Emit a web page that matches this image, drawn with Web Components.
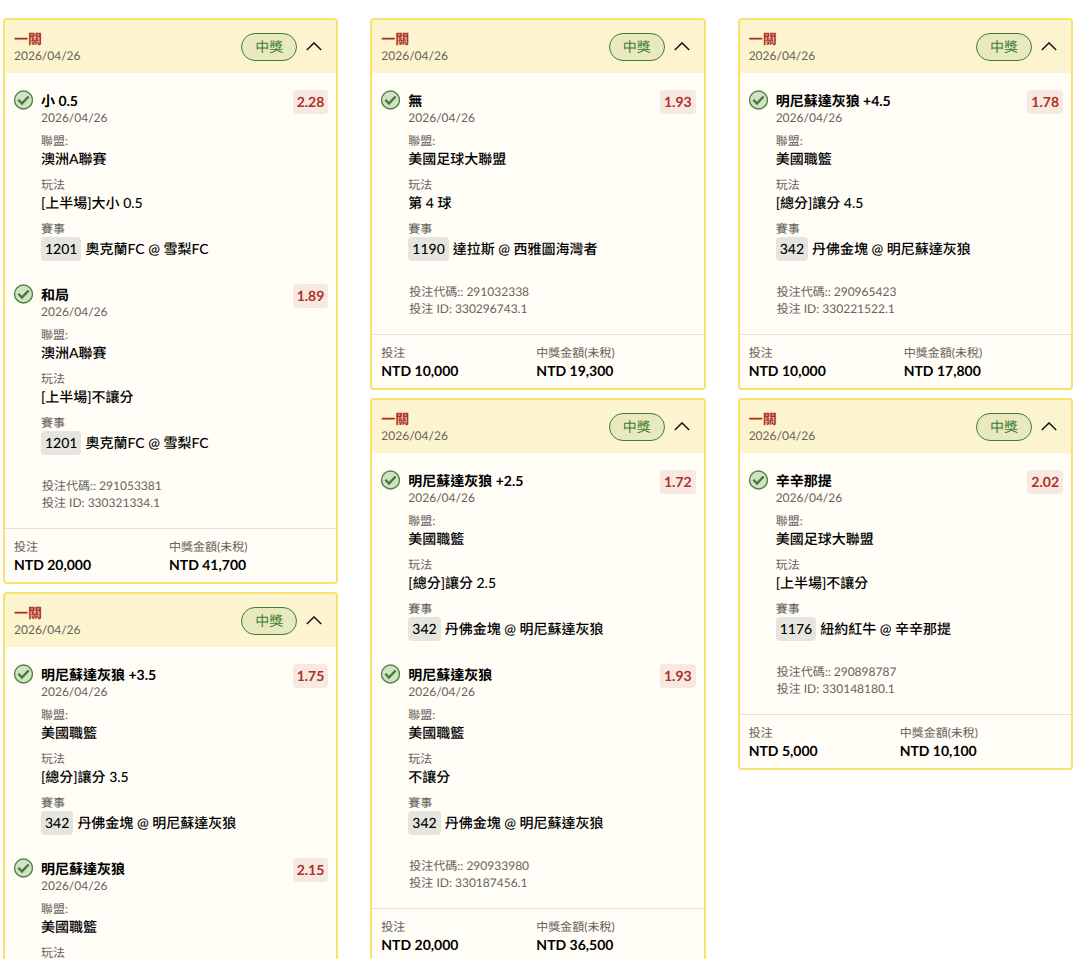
<!DOCTYPE html>
<html lang="zh-Hant">
<head>
    <meta charset="UTF-8">
    <meta name="viewport" content="width=device-width, initial-scale=1.0">
    <title>投注紀錄</title>
    <style>
        body {
            margin: 0;
            background: #fff;
            color: #000;
            font-family: Lato, "Noto Sans CJK TC", sans-serif;
            font-size: 14px;
            line-height: 20px;
            text-rendering: geometricPrecision;
        }
    </style>
</head>
<body>
    <bet-board>
        <bet-column>
            <bet-slip date="2026/04/26" code="291053381" bet-id="330321334.1" stake="NTD 20,000" payout="NTD 41,700">
                <bet-leg date="2026/04/26" odds="2.28" league="澳洲A聯賽" play="[上半場]大小 0.5" number="1201" match="奧克蘭FC @ 雪梨FC">小 0.5</bet-leg>
                <bet-leg date="2026/04/26" odds="1.89" league="澳洲A聯賽" play="[上半場]不讓分" number="1201" match="奧克蘭FC @ 雪梨FC">和局</bet-leg>
            </bet-slip>
            <bet-slip date="2026/04/26">
                <bet-leg date="2026/04/26" odds="1.75" league="美國職籃" play="[總分]讓分 3.5" number="342" match="丹佛金塊 @ 明尼蘇達灰狼">明尼蘇達灰狼 +3.5</bet-leg>
                <bet-leg date="2026/04/26" odds="2.15" league="美國職籃" play="不讓分" number="342" match="丹佛金塊 @ 明尼蘇達灰狼">明尼蘇達灰狼</bet-leg>
            </bet-slip>
        </bet-column>
        <bet-column>
            <bet-slip date="2026/04/26" code="291032338" bet-id="330296743.1" stake="NTD 10,000" payout="NTD 19,300">
                <bet-leg date="2026/04/26" odds="1.93" league="美國足球大聯盟" play="第 4 球" number="1190" match="達拉斯 @ 西雅圖海灣者">無</bet-leg>
            </bet-slip>
            <bet-slip date="2026/04/26" code="290933980" bet-id="330187456.1" stake="NTD 20,000" payout="NTD 36,500">
                <bet-leg date="2026/04/26" odds="1.72" league="美國職籃" play="[總分]讓分 2.5" number="342" match="丹佛金塊 @ 明尼蘇達灰狼">明尼蘇達灰狼 +2.5</bet-leg>
                <bet-leg date="2026/04/26" odds="1.93" league="美國職籃" play="不讓分" number="342" match="丹佛金塊 @ 明尼蘇達灰狼">明尼蘇達灰狼</bet-leg>
            </bet-slip>
        </bet-column>
        <bet-column>
            <bet-slip date="2026/04/26" code="290965423" bet-id="330221522.1" stake="NTD 10,000" payout="NTD 17,800">
                <bet-leg date="2026/04/26" odds="1.78" league="美國職籃" play="[總分]讓分 4.5" number="342" match="丹佛金塊 @ 明尼蘇達灰狼">明尼蘇達灰狼 +4.5</bet-leg>
            </bet-slip>
            <bet-slip date="2026/04/26" code="290898787" bet-id="330148180.1" stake="NTD 5,000" payout="NTD 10,100">
                <bet-leg date="2026/04/26" odds="2.02" league="美國足球大聯盟" play="[上半場]不讓分" number="1176" match="紐約紅牛 @ 辛辛那提">辛辛那提</bet-leg>
            </bet-slip>
        </bet-column>
    </bet-board>

    <template id="board-template">
        <style>
            :host {
                display: grid;
                grid-template-columns: repeat(3, minmax(0, 1fr));
                align-items: start;
                gap: 32px;
                padding: 18px 7px 8px 3px;
            }
        </style>
        <slot></slot>
    </template>

    <template id="column-template">
        <style>
            :host {
                display: flex;
                flex-direction: column;
                gap: 8px;
            }
        </style>
        <slot></slot>
    </template>

    <template id="slip-template">
        <style>
            :host {
                display: block;
                border: 2px solid #f9e06f;
                border-radius: 4px;
                background: #fffdf6;
                overflow: hidden;
            }
            header {
                display: flex;
                align-items: center;
                gap: 9px;
                padding: 10px 14px 9px 9px;
                background: #fcf3cf;
            }
            .heading {
                flex: 1;
            }
            h2 {
                margin: 0;
                color: #b03024;
                font-size: 14px;
                line-height: 18px;
                font-weight: 700;
            }
            time {
                display: block;
                color: #66635a;
                font-size: 12px;
                line-height: 16px;
            }
            .status {
                padding: 3px 13px;
                border: 1px solid #3f7d32;
                border-radius: 14px;
                background: #e8e9bf;
                color: #3f7d32;
                line-height: 20px;
            }
            button {
                display: flex;
                padding: 0;
                border: 0;
                background: none;
                color: #111;
                cursor: pointer;
            }
            button.closed svg {
                transform: rotate(180deg);
            }
            .legs {
                display: flex;
                flex-direction: column;
                gap: 23px;
                padding: 17px 8px 22px;
            }
            .codes {
                padding: 0 8px 17px 37px;
                color: #66635a;
                font-size: 12px;
                line-height: 17px;
            }
            .codes p, dl, dd {
                margin: 0;
            }
            dl {
                display: flex;
                padding: 9px 11px 7px 9px;
                border-top: 1px solid #e2e0dc;
            }
            dl div {
                flex: 1 1 auto;
            }
            dt {
                color: #66635a;
                font-size: 12px;
                line-height: 17px;
            }
            dd {
                font-weight: 700;
                line-height: 20px;
            }
            [hidden] {
                display: none;
            }
        </style>
        <header>
            <div class="heading">
                <h2>一關</h2>
                <time></time>
            </div>
            <span class="status">中獎</span>
            <button type="button" aria-expanded="true" aria-label="收合">
                <svg width="16" height="10" viewBox="0 0 16 10" fill="none" stroke="currentColor" stroke-width="1.4"><path d="M.8 8 8 .9 15.2 8"/></svg>
            </button>
        </header>
        <div class="content">
            <div class="legs"><slot></slot></div>
            <div class="codes">
                <p>投注代碼:: <span class="code"></span></p>
                <p>投注 ID: <span class="bet-id"></span></p>
            </div>
        </div>
        <dl>
            <div><dt>投注</dt><dd class="stake"></dd></div>
            <div><dt>中獎金額(未稅)</dt><dd class="payout"></dd></div>
        </dl>
    </template>

    <template id="leg-template">
        <style>
            :host {
                display: grid;
                grid-template-columns: 20px 1fr auto;
                align-items: start;
                column-gap: 8px;
            }
            .main {
                padding-top: 2px;
            }
            h3 {
                margin: 0;
                font-size: 14px;
                line-height: 18px;
                font-weight: 700;
            }
            time {
                display: block;
                color: #66635a;
                font-size: 12px;
                line-height: 16px;
            }
            dl {
                display: flex;
                flex-direction: column;
                gap: 7px;
                margin: 6px 0 0;
            }
            dt {
                color: #66635a;
                font-size: 12px;
                line-height: 17px;
            }
            dd {
                margin: 0;
                font-weight: 500;
                line-height: 20px;
            }
            .match {
                display: flex;
                gap: 4px;
                line-height: 24px;
            }
            .number {
                padding: 0 4px;
                border-radius: 4px;
                background: #e6e4de;
            }
            .odds {
                padding: 0 4px;
                border-radius: 4px;
                background: #f6e9e2;
                color: #b03024;
                font-weight: 700;
                line-height: 24px;
            }
        </style>
        <svg width="20" height="20" viewBox="0 0 20 20" fill="none" aria-hidden="true">
            <circle cx="10.5" cy="10" r="9" fill="#d5e0c8" stroke="#4d8740" stroke-width="1.4"/>
            <path d="m5.4 9.8 3.5 3.7 6.7-7" stroke="#3f7d32" stroke-width="2.4"/>
        </svg>
        <div class="main">
            <h3><slot></slot></h3>
            <time></time>
            <dl>
                <div><dt>聯盟:</dt><dd class="league"></dd></div>
                <div><dt>玩法</dt><dd class="play"></dd></div>
                <div><dt>賽事</dt><dd class="match"><span class="number"></span><span class="teams"></span></dd></div>
            </dl>
        </div>
        <span class="odds"></span>
    </template>

    <script>
        class BaseElement extends HTMLElement {
            constructor(templateId) {
                super();
                this.attachShadow({ mode: 'open' });
                const template = document.getElementById(templateId);
                this.shadowRoot.appendChild(template.content.cloneNode(true));
            }

            fill(selector, attribute) {
                this.shadowRoot.querySelector(selector).textContent = this.getAttribute(attribute) || '';
            }
        }

        class BetBoard extends BaseElement {
            constructor() {
                super('board-template');
            }
        }

        class BetColumn extends BaseElement {
            constructor() {
                super('column-template');
            }
        }

        class BetSlip extends BaseElement {
            constructor() {
                super('slip-template');
                const button = this.shadowRoot.querySelector('button');
                const content = this.shadowRoot.querySelector('.content');

                // Collapse the legs, the totals stay visible
                button.addEventListener('click', () => {
                    content.hidden = !content.hidden;
                    button.classList.toggle('closed', content.hidden);
                    button.setAttribute('aria-expanded', String(!content.hidden));
                });
            }

            connectedCallback() {
                this.fill('time', 'date');
                this.fill('.code', 'code');
                this.fill('.bet-id', 'bet-id');
                this.fill('.stake', 'stake');
                this.fill('.payout', 'payout');
                this.shadowRoot.querySelector('.codes').hidden = !this.hasAttribute('code');
                this.shadowRoot.querySelector('dl').hidden = !this.hasAttribute('stake');
            }
        }

        class BetLeg extends BaseElement {
            constructor() {
                super('leg-template');
            }

            connectedCallback() {
                this.fill('time', 'date');
                this.fill('.odds', 'odds');
                this.fill('.league', 'league');
                this.fill('.play', 'play');
                this.fill('.number', 'number');
                this.fill('.teams', 'match');
            }
        }

        customElements.define('bet-board', BetBoard);
        customElements.define('bet-column', BetColumn);
        customElements.define('bet-slip', BetSlip);
        customElements.define('bet-leg', BetLeg);
    </script>
</body>
</html>
